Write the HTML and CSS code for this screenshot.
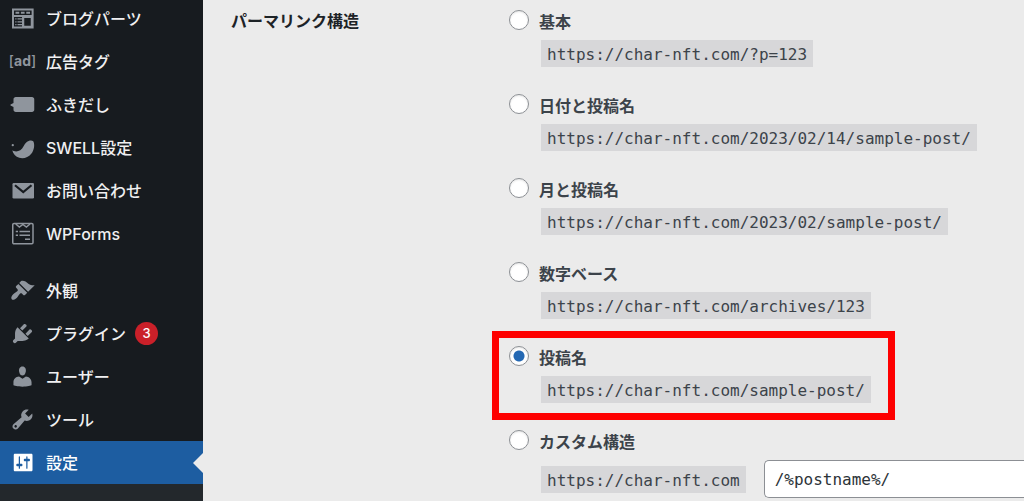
FILE: index.html
```
<!DOCTYPE html>
<html lang="ja">
<head>
    <meta charset="UTF-8">
    <meta name="viewport" content="width=device-width, initial-scale=1.0">
    <title>パーマリンク設定</title>
    <link rel="stylesheet" href="styles.css">
</head>
<body>
    <nav class="sidebar">
        <ul class="menu">
            <li><a href="#" class="menu-item">
                <svg class="icon" viewBox="0 0 20 20"><path fill-rule="evenodd" d="M1.600 2h17.300v16H1.600zM3.200 3.600v3.600h14.100V3.600zM3.200 8.800v7.600h6.400V8.800zM11.400 9.600v6.200h5.200V9.600z"/><path d="M4.400 4.600h3v1.600h-3zM8.700 4.600h3v1.600h-3zM13 4.600h3v1.600h-3zM4.200 9.800h1v1h-1zM6 9.800h3.600v1H6zM4.200 12.100h1v1h-1zM6 12.100h3.600v1H6zM4.200 14.400h1v1h-1zM6 14.400h3.600v1H6z"/></svg>
                <span>ブログパーツ</span>
            </a></li>
            <li><a href="#" class="menu-item">
                <span class="icon icon-ad">[<b>ad</b>]</span>
                <span>広告タグ</span>
            </a></li>
            <li><a href="#" class="menu-item">
                <svg class="icon" viewBox="0 0 20 20"><path d="M4.600 4h13c1 0 1.800.8 1.800 1.800v8.400c0 1-.8 1.800-1.800 1.800h-13c-1 0-1.800-.8-1.800-1.800v-2.200L.4 10.800v-.8L2.800 8.800V5.800C2.800 4.800 3.600 4 4.600 4z"/></svg>
                <span>ふきだし</span>
            </a></li>
            <li><a href="#" class="menu-item">
                <svg class="icon" viewBox="0 0 20 20"><circle cx="2.200" cy="8.100" r=".9"/><path d="M1.800 12.200C3 13.200 6 13.600 8.200 12.200C10.600 10.600 11.200 7.400 13.200 5.800C14.800 4.500 17 3.900 18.600 4.900C20 7.600 19.400 12 17 15C14.600 18 10.800 19.200 7.400 18.200C4.600 17.400 2.400 15.200 1.800 12.200z"/></svg>
                <span>SWELL設定</span>
            </a></li>
            <li><a href="#" class="menu-item">
                <svg class="icon" viewBox="0 0 20 20"><rect x="2" y="4" width="17.200" height="12.400" rx="1"/><path class="cut" d="M4 5.800l6.600 5.400 6.600-5.400"/></svg>
                <span>お問い合わせ</span>
            </a></li>
            <li><a href="#" class="menu-item">
                <svg class="icon icon-line" viewBox="0 0 20 20"><rect x="2.200" y="2" width="16.200" height="16.200" rx="1"/><path d="M4.600 2.400l2.900 2.500 2.800-2.100 2.800 2.100L16 2.400M4.600 8.400h1.800M7.600 8.400h8.400M4.600 11.400h1.800M7.600 11.400h8.400M12 14.600h4"/></svg>
                <span>WPForms</span>
            </a></li>
            <li class="separator"></li>
            <li><a href="#" class="menu-item">
                <svg class="icon" viewBox="0 0 20 20"><path d="M14.480 11.060L7.410 3.990l1.500-1.500c.5-.56 2.300-.47 3.510.32 1.210.8 1.430 1.280 2.910 2.100 1.180.64 2.450 1.260 4.450.85zm-.71.71L6.700 4.700 4.930 6.470c-.39.39-.39 1.020 0 1.410l1.060 1.060c.39.39.39 1.030 0 1.420-.6.6-1.430 1.110-2.210 1.690-.35.26-.7.53-1.010.84C1.430 14.230.4 16.080 1.400 17.070c.99 1 2.840-.03 4.180-1.360.31-.31.58-.66.85-1.020.57-.78 1.080-1.610 1.690-2.210.39-.39 1.020-.39 1.410 0l1.060 1.060c.39.39 1.020.39 1.410 0z"/></svg>
                <span>外観</span>
            </a></li>
            <li><a href="#" class="menu-item">
                <svg class="icon" viewBox="0 0 20 20"><path d="M13.110 4.360L9.870 7.600 8 5.730l3.240-3.240c.35-.34 1.050-.2 1.560.32.52.51.66 1.210.31 1.550zm-8 1.770l.91-1.120 9.010 9.010-1.190.84c-.71.71-2.630 1.160-3.820 1.160H6.140L4.900 17.260c-.59.59-1.540.59-2.120 0-.59-.58-.59-1.530 0-2.120l1.240-1.240v-3.880c0-1.130.4-3.190 1.090-3.890zm7.260 3.970l3.240-3.240c.34-.35 1.040-.21 1.550.31.52.51.66 1.210.31 1.550l-3.240 3.250z"/></svg>
                <span>プラグイン</span>
                <span class="badge">3</span>
            </a></li>
            <li><a href="#" class="menu-item">
                <svg class="icon" viewBox="0 0 20 20"><path d="M10 9.250c-2.270 0-2.730-3.440-2.730-3.440C7 4.020 7.820 2 9.970 2c2.160 0 2.980 2.020 2.710 3.810 0 0-.41 3.440-2.680 3.440zm0 2.570L12.720 10c2.390 0 4.520 2.330 4.520 4.530v2.490s-3.650 1.130-7.240 1.130c-3.650 0-7.240-1.130-7.240-1.130v-2.490c0-2.250 1.940-4.480 4.470-4.480z"/></svg>
                <span>ユーザー</span>
            </a></li>
            <li><a href="#" class="menu-item">
                <svg class="icon" viewBox="0 0 20 20"><path d="M16.680 9.770c-1.340 1.340-3.300 1.670-4.950.99l-5.410 6.520c-.99.99-2.590.99-3.580 0s-.99-2.590 0-3.570l6.520-5.420c-.68-1.650-.35-3.610.99-4.950 1.280-1.280 3.120-1.620 4.720-1.060l-2.890 2.890 2.820 2.820 2.860-2.870c.53 1.580.18 3.390-1.080 4.650zM3.810 16.210c.4.39 1.040.39 1.430 0 .4-.4.4-1.040 0-1.430-.39-.4-1.030-.4-1.430 0-.39.39-.39 1.030 0 1.430z"/></svg>
                <span>ツール</span>
            </a></li>
            <li><a href="#" class="menu-item active">
                <svg class="icon" viewBox="0 0 20 20"><path d="M18 16V4c0-.55-.45-1-1-1H4c-.55 0-1 .45-1 1v12c0 .55.45 1 1 1h13c.55 0 1-.45 1-1zM8 11h1c.55 0 1 .45 1 1s-.45 1-1 1H8v1.500c0 .28-.22.5-.5.5s-.5-.22-.5-.5V13H6c-.55 0-1-.45-1-1s.45-1 1-1h1V5.500c0-.28.22-.5.5-.5s.5.22.5.5V11zm5-2h-1c-.55 0-1-.45-1-1s.45-1 1-1h1V5.500c0-.28.22-.5.5-.5s.5.22.5.5V7h1c.55 0 1 .45 1 1s-.45 1-1 1h-1v5.500c0 .28-.22.5-.5.5s-.5-.22-.5-.5V9z"/></svg>
                <span>設定</span>
            </a></li>
            <li class="submenu"></li>
        </ul>
    </nav>

    <main class="content">
        <form class="permalink-form">
            <h2 class="form-title" id="structureTitle">パーマリンク構造</h2>
            <div class="options" role="radiogroup" aria-labelledby="structureTitle">
                <div class="option">
                    <label><input type="radio" name="structure" value="plain">基本</label>
                    <code>https://char-nft.com/?p=123</code>
                </div>
                <div class="option">
                    <label><input type="radio" name="structure" value="day">日付と投稿名</label>
                    <code>https://char-nft.com/2023/02/14/sample-post/</code>
                </div>
                <div class="option">
                    <label><input type="radio" name="structure" value="month">月と投稿名</label>
                    <code>https://char-nft.com/2023/02/sample-post/</code>
                </div>
                <div class="option">
                    <label><input type="radio" name="structure" value="numeric">数字ベース</label>
                    <code>https://char-nft.com/archives/123</code>
                </div>
                <div class="option highlighted">
                    <label><input type="radio" name="structure" value="postname" checked>投稿名</label>
                    <code>https://char-nft.com/sample-post/</code>
                </div>
                <div class="option">
                    <label><input type="radio" name="structure" value="custom">カスタム構造</label>
                    <div class="custom-row">
                        <code>https://char-nft.com</code>
                        <input type="text" class="custom-input" name="permalink" value="/%postname%/" aria-label="カスタム構造">
                    </div>
                </div>
            </div>
        </form>
    </main>
</body>
</html>
```

FILE: styles.css
```
*,
*::after {
    box-sizing: border-box;
}

body {
    margin: 0;
    height: 100vh;
    display: flex;
    overflow: hidden;
    background-color: #ebebeb;
    color: #3c434a;
    font-family: Inter, 'Noto Sans CJK JP', sans-serif;
    font-size: 16px;
    line-height: 24px;
}

/* Sidebar */
.sidebar {
    flex: 0 0 203px;
    background-color: #171b1f;
    overflow: hidden;
}

.menu {
    list-style: none;
    margin: -3px 0 0;
    padding: 0;
}

.menu-item {
    position: relative;
    display: flex;
    align-items: center;
    height: 43px;
    padding-left: 10px;
    color: #f0f0f1;
    font-weight: 500;
    text-decoration: none;
}

.icon {
    flex: none;
    width: 25px;
    height: 25px;
    margin-right: 11px;
    fill: #8f959d;
}

.icon-line {
    fill: none;
    stroke: #8f959d;
    stroke-width: 1.2;
}

.icon .cut {
    fill: none;
    stroke: #171b1f;
    stroke-width: 1.8;
}

.icon-ad {
    display: flex;
    justify-content: center;
    color: #8f959d;
    font-size: 14px;
}

.separator {
    height: 14px;
}

.badge {
    width: 23px;
    height: 23px;
    margin-left: 9px;
    border-radius: 50%;
    background-color: #ca2029;
    color: #fff;
    font-size: 13px;
    line-height: 23px;
    text-align: center;
}

.active {
    background-color: #1d5da1;
    color: #fff;
}

.active .icon {
    fill: #fff;
}

.active::after {
    content: '';
    position: absolute;
    right: 0;
    top: 12px;
    border: 10px solid transparent;
    border-left: none;
    border-right-color: #ebebeb;
}

.submenu {
    height: 40px;
    background-color: #23282c;
}

/* Permalink settings */
.content {
    flex: 1;
    min-width: 0;
    padding: 7px 0 0 28px;
}

.permalink-form {
    display: flex;
}

.form-title {
    flex: 0 0 278px;
    margin: 0;
    color: #1d2327;
    font-size: 16px;
    font-weight: 700;
    line-height: 28px;
}

.options {
    flex: 1;
    min-width: 0;
}

.option {
    position: relative;
    margin-bottom: 24px;
}

.option label {
    display: flex;
    align-items: flex-start;
    gap: 10px;
    height: 24px;
    margin-bottom: 9px;
    padding-top: 3px;
    font-weight: 700;
}

.option input[type="radio"] {
    appearance: none;
    width: 20px;
    height: 20px;
    margin: 0;
    border: 1px solid #8c8f94;
    border-radius: 50%;
    background-color: #fff;
    box-shadow: inset 0 1px 2px rgba(0, 0, 0, 0.1);
}

.option input[type="radio"]:checked {
    background-image: radial-gradient(circle, #2468b3 5px, transparent 6px);
}

code {
    display: block;
    width: fit-content;
    height: 27px;
    margin-left: 32px;
    padding: 0 6px;
    background-color: #d7d7d9;
    font-family: 'DejaVu Sans Mono', monospace;
    font-size: 16px;
    line-height: 29px;
    white-space: nowrap;
}

/* red frame around the recommended option */
.highlighted::after {
    content: '';
    position: absolute;
    top: -12px;
    left: -17px;
    width: 403px;
    height: 89px;
    border: 7px solid #fe0000;
    pointer-events: none;
}

.custom-row {
    display: flex;
    align-items: center;
    gap: 18px;
}

/* the field runs flush to the right side of the page */
.custom-input {
    flex: 1;
    min-width: 0;
    height: 38px;
    padding: 0 10px;
    border: 1px solid #8c8f94;
    border-right: none;
    border-radius: 5px 0 0 5px;
    background-color: #fff;
    color: #2c3338;
    font-family: 'DejaVu Sans Mono', monospace;
    font-size: 16px;
}
```
